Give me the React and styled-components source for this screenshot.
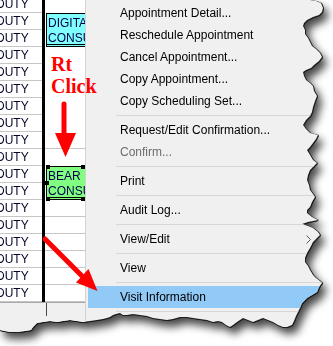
import React from 'react';
import styled, { createGlobalStyle } from 'styled-components';

const GlobalStyle = createGlobalStyle`
  html, body {
    margin: 0;
    padding: 0;
    background: #ffffff;
  }
  body {
    font-family: "Liberation Sans", Arial, sans-serif;
  }
`;

// torn paper outline of the screenshot (right + bottom edges)
const EDGE = [
  [0, 0], [310, 0], [316, 1], [321, 3], [323, 8], [322, 12], [319, 15], [313, 17], [307, 20],
  [304, 23], [303, 26], [305, 30], [305, 34], [308, 38], [310, 42], [312, 46], [316, 49],
  [320, 53], [322, 57], [319, 61], [314, 65], [311, 68], [306, 70], [303, 72], [304, 76],
  [306, 80], [310, 83], [313, 86], [314, 91], [317, 96], [315, 101], [313, 107], [312, 112],
  [310, 116], [306, 120], [303, 125], [306, 129], [310, 133], [318, 135], [316, 139],
  [313, 143], [310, 147], [307, 150], [310, 155], [313, 160], [317, 163], [313, 167],
  [310, 170], [308, 175], [307, 180], [309, 185], [310, 190], [313, 194], [315, 197],
  [312, 202], [310, 207], [307, 210], [307, 213], [312, 217], [318, 220], [308, 222],
  [302, 224], [308, 226], [313, 228], [318, 232], [320, 235], [316, 239], [313, 242],
  [310, 248], [307, 253], [305, 258], [305, 262], [308, 266], [310, 270], [313, 275],
  [316, 278], [320, 281], [322, 283], [319, 287], [317, 292], [312, 295], [307, 298],
  [302, 303], [300, 308], [298, 312], [296, 316], [294, 321], [292, 325], [287, 327],
  [283, 327], [278, 325], [273, 322], [268, 320], [263, 318], [258, 320], [253, 322],
  [248, 320], [243, 318], [240, 320], [237, 322], [233, 325], [230, 327], [226, 325],
  [222, 322], [218, 321], [213, 322], [207, 320], [200, 319], [193, 318], [187, 317],
  [180, 317], [173, 319], [167, 320], [160, 319], [153, 318], [147, 316], [140, 315],
  [133, 314], [127, 315], [123, 315], [120, 313], [116, 314], [113, 315], [110, 317],
  [107, 318], [103, 319], [97, 320], [90, 321], [83, 322], [77, 321], [70, 320],
  [63, 321], [57, 322], [50, 321], [43, 322], [37, 323], [35, 325], [33, 327], [31, 330],
  [25, 331], [17, 332], [10, 332], [5, 331], [0, 330],
].map(([x, y]) => `${x}px ${y}px`).join(', ');

const Frame = styled.div`
  position: relative;
  width: 333px;
  height: 346px;
  overflow: hidden;
  background: #ffffff;
`;

const Paper = styled.div`
  width: 333px;
  height: 346px;
  filter: drop-shadow(1px 0 0 #1c1c1c) drop-shadow(0 1px 0 #1c1c1c)
    drop-shadow(4px 6px 4px rgba(0, 0, 0, 0.72));
`;

const Sheet = styled.div`
  display: flex;
  width: 333px;
  height: 346px;
  background: #f0f0f0;
  clip-path: polygon(${EDGE});
`;

const Schedule = styled.div`
  width: 85px;
  flex-shrink: 0;
  display: flex;
  flex-direction: column;
`;

const Grid = styled.div`
  display: flex;
  height: 302px;
  background: #ffffff;
`;

const DutyCol = styled.div`
  width: 42px;
  display: flex;
  flex-direction: column;
  overflow: hidden;
`;

const DutyCell = styled.div`
  height: ${p => p.$h}px;
  box-sizing: border-box;
  border-bottom: 1px solid #c6c6c6;
  display: flex;
  align-items: flex-end;
  overflow: hidden;
  font-size: 12px;
  line-height: 16px;
  color: #05052a;
  white-space: nowrap;

  span {
    margin-left: -4px;
  }
`;

const BlackRule = styled.div`
  width: 3px;
  background: #000000;
`;

const ApptCol = styled.div`
  width: 40px;
  display: grid;
  grid-template-rows: 13px repeat(17, 17px);
  overflow: hidden;
`;

const Slot = styled.div`
  box-sizing: border-box;
  border-bottom: ${p => (p.$line ? '1px solid #c6c6c6' : 'none')};
`;

const Appt = styled.div`
  grid-row: span 2;
  position: relative;
  box-sizing: border-box;
  margin-left: 1px;
  background: ${p => p.$color};
  border: 1px solid #000000;
  border-bottom: 3px double #000000;
`;

const ApptText = styled.div`
  height: 100%;
  overflow: hidden;
  padding: 2px 0 0 1px;
  box-sizing: border-box;
  font-size: 12px;
  line-height: 15px;
  color: #00004a;
  white-space: nowrap;
`;

const Handle = styled.div`
  position: absolute;
  width: 4px;
  height: 4px;
  background: #000000;
  left: ${p => p.$x};
  top: ${p => p.$y};
`;

const Footer = styled.div`
  flex: 1;
  background: #f0f0f0;
  border-top: 1px solid #a9a9a9;
`;

const Splitter = styled.div`
  margin-left: 46px;
  width: 1px;
  height: 13px;
  background: #4a4a4a;
`;

const Menu = styled.div`
  flex: 1;
  display: flex;
  flex-direction: column;
  padding: 2px 0 0 2px;
  border-left: 1px solid #d2d2d2;
`;

const Item = styled.div`
  height: 22px;
  flex-shrink: 0;
  display: flex;
  align-items: center;
  padding: 0 22px 0 32px;
  font-size: 12px;
  white-space: nowrap;
  color: ${p => (p.$disabled ? '#6d6d6d' : '#000000')};
  background: ${p => (p.$active ? '#91c9f7' : 'transparent')};
`;

const Separator = styled.div`
  height: 7px;
  flex-shrink: 0;
  display: flex;
  align-items: center;
  padding-left: 28px;

  &::after {
    content: '';
    flex: 1;
    height: 1px;
    background: #d7d7d7;
  }
`;

const Chevron = styled.svg`
  margin-left: auto;
`;

const Label = styled.div`
  position: absolute;
  left: 51px;
  top: 53px;
  font-family: "Liberation Serif", "Times New Roman", serif;
  font-weight: bold;
  font-size: 20px;
  line-height: 22px;
  color: #ff0000;
`;

const Overlay = styled.svg`
  position: absolute;
  left: 0;
  top: 0;
  pointer-events: none;
`;

const menu = [
  { label: 'Appointment Detail...' },
  { label: 'Reschedule Appointment' },
  { label: 'Cancel Appointment...' },
  { label: 'Copy Appointment...' },
  { label: 'Copy Scheduling Set...' },
  { sep: true },
  { label: 'Request/Edit Confirmation...' },
  { label: 'Confirm...', disabled: true },
  { sep: true },
  { label: 'Print' },
  { sep: true },
  { label: 'Audit Log...' },
  { sep: true },
  { label: 'View/Edit', sub: true },
  { sep: true },
  { label: 'View' },
  { sep: true },
  { label: 'Visit Information', active: true },
  { sep: true },
  { label: 'Eligibility Checking...' },
];

// rows of the second column: 1 = top partial row, then 17 full rows
const slotLines = [9, 13, 14, 15, 16, 17, 18];

const renderSlots = (from, to) => {
  const out = [];
  for (let r = from; r <= to; r++) {
    out.push(<Slot key={r} $line={slotLines.includes(r)} />);
  }
  return out;
};

const App = () => {
  return (
    <>
      <GlobalStyle />
      <Frame>
        <Paper>
          <Sheet>
            <Schedule>
              <Grid>
                <DutyCol>
                  <DutyCell $h={13}><span>DUTY</span></DutyCell>
                  {Array.from({ length: 17 }).map((_, i) => (
                    <DutyCell key={i} $h={17}><span>DUTY</span></DutyCell>
                  ))}
                </DutyCol>
                <BlackRule />
                <ApptCol>
                  {renderSlots(1, 1)}
                  <Appt $color="#80ffff">
                    <ApptText>
                      <div>DIGITAL</div>
                      <div>CONSULT</div>
                    </ApptText>
                  </Appt>
                  {renderSlots(4, 10)}
                  <Appt $color="#80ff80">
                    <ApptText>
                      <div>BEAR</div>
                      <div>CONSULT</div>
                    </ApptText>
                    <Handle $x="-1px" $y="-2px" />
                    <Handle $x="-2px" $y="14px" />
                    <Handle $x="-1px" $y="30px" />
                    <Handle $x="34px" $y="-2px" />
                    <Handle $x="34px" $y="30px" />
                  </Appt>
                  {renderSlots(13, 18)}
                </ApptCol>
              </Grid>
              <Footer>
                <Splitter />
              </Footer>
            </Schedule>
            <Menu>
              {menu.map((m, i) =>
                m.sep ? (
                  <Separator key={i} />
                ) : (
                  <Item key={i} $disabled={m.disabled} $active={m.active}>
                    {m.label}
                    {m.sub && (
                      <Chevron width="5" height="9" viewBox="0 0 5 9">
                        <path d="M0.5 0.5 L4.5 4.5 L0.5 8.5" fill="none" stroke="#5a5a5a" strokeWidth="1" />
                      </Chevron>
                    )}
                  </Item>
                )
              )}
            </Menu>
          </Sheet>
        </Paper>

        <Label>
          Rt
          <br />
          Click
        </Label>
        <Overlay width="333" height="346" viewBox="0 0 333 346">
          <line x1="64" y1="104" x2="64" y2="135" stroke="#ff0000" strokeWidth="5" strokeLinecap="round" />
          <polygon points="55,133 76,133 65.5,157" fill="#ff0000" />
          <line x1="45" y1="239" x2="83" y2="277" stroke="#ff0000" strokeWidth="5" strokeLinecap="round" />
          <polygon points="88.5,269 76,282.5 97.5,291" fill="#ff0000" />
        </Overlay>
      </Frame>
    </>
  );
};

export default App;
